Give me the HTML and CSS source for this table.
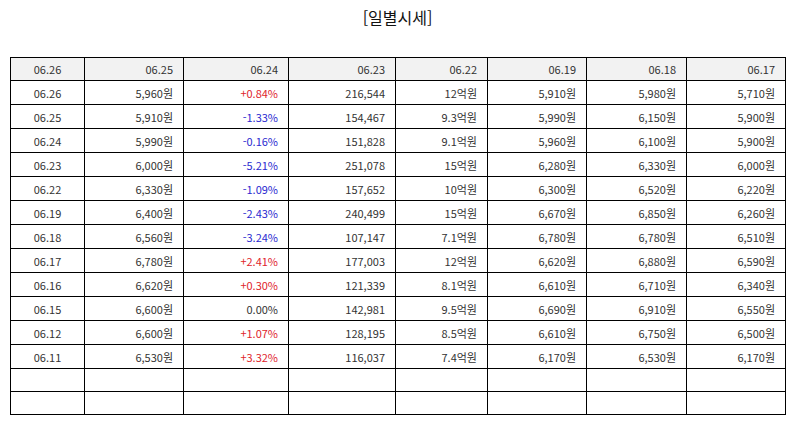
FILE: index.html
```html
<!DOCTYPE html>
<html lang="ko">
<head>
<meta charset="utf-8">
<link rel="stylesheet" href="styles.css">
</head>
<body>
<h1 class="title">[일별시세]</h1>
<table class="grid">
<colgroup>
<col class="c1"><col class="c2"><col class="c3"><col class="c4"><col class="c5"><col class="c6"><col class="c7"><col class="c8">
</colgroup>
<thead>
<tr><th class="ctr">06.26</th><th>06.25</th><th>06.24</th><th>06.23</th><th>06.22</th><th>06.19</th><th>06.18</th><th>06.17</th></tr>
</thead>
<tbody>
<tr><td class="ctr">06.26</td><td>5,960원</td><td class="up">+0.84%</td><td>216,544</td><td>12억원</td><td>5,910원</td><td>5,980원</td><td>5,710원</td></tr>
<tr><td class="ctr">06.25</td><td>5,910원</td><td class="down">-1.33%</td><td>154,467</td><td>9.3억원</td><td>5,990원</td><td>6,150원</td><td>5,900원</td></tr>
<tr><td class="ctr">06.24</td><td>5,990원</td><td class="down">-0.16%</td><td>151,828</td><td>9.1억원</td><td>5,960원</td><td>6,100원</td><td>5,900원</td></tr>
<tr><td class="ctr">06.23</td><td>6,000원</td><td class="down">-5.21%</td><td>251,078</td><td>15억원</td><td>6,280원</td><td>6,330원</td><td>6,000원</td></tr>
<tr><td class="ctr">06.22</td><td>6,330원</td><td class="down">-1.09%</td><td>157,652</td><td>10억원</td><td>6,300원</td><td>6,520원</td><td>6,220원</td></tr>
<tr><td class="ctr">06.19</td><td>6,400원</td><td class="down">-2.43%</td><td>240,499</td><td>15억원</td><td>6,670원</td><td>6,850원</td><td>6,260원</td></tr>
<tr><td class="ctr">06.18</td><td>6,560원</td><td class="down">-3.24%</td><td>107,147</td><td>7.1억원</td><td>6,780원</td><td>6,780원</td><td>6,510원</td></tr>
<tr><td class="ctr">06.17</td><td>6,780원</td><td class="up">+2.41%</td><td>177,003</td><td>12억원</td><td>6,620원</td><td>6,880원</td><td>6,590원</td></tr>
<tr><td class="ctr">06.16</td><td>6,620원</td><td class="up">+0.30%</td><td>121,339</td><td>8.1억원</td><td>6,610원</td><td>6,710원</td><td>6,340원</td></tr>
<tr><td class="ctr">06.15</td><td>6,600원</td><td>0.00%</td><td>142,981</td><td>9.5억원</td><td>6,690원</td><td>6,910원</td><td>6,550원</td></tr>
<tr><td class="ctr">06.12</td><td>6,600원</td><td class="up">+1.07%</td><td>128,195</td><td>8.5억원</td><td>6,610원</td><td>6,750원</td><td>6,500원</td></tr>
<tr><td class="ctr">06.11</td><td>6,530원</td><td class="up">+3.32%</td><td>116,037</td><td>7.4억원</td><td>6,170원</td><td>6,530원</td><td>6,170원</td></tr>
<tr class="empty"><td></td><td></td><td></td><td></td><td></td><td></td><td></td><td></td></tr>
<tr class="empty"><td></td><td></td><td></td><td></td><td></td><td></td><td></td><td></td></tr>
</tbody>
</table>
</body>
</html>
```
FILE: styles.css
```css
html, body {
  margin: 0;
  padding: 0;
  background: #fff;
}
body {
  padding: 0 9px 0 10px;
  font-family: "Noto Sans CJK KR", "Noto Sans", sans-serif;
  color: #333;
}
.title {
  margin: 0;
  height: 57px;
  padding-top: 6px;
  box-sizing: border-box;
  text-align: center;
  font-size: 16px;
  font-weight: 400;
  line-height: 22px;
  color: #111;
}
.grid {
  border-collapse: collapse;
  table-layout: fixed;
  width: 776px;
  font-size: 11px;
}
.c1 { width: 74px; }
.c2 { width: 99px; }
.c3 { width: 105px; }
.c4 { width: 107px; }
.c5 { width: 92px; }
.c6 { width: 99px; }
.c7 { width: 100px; }
.c8 { width: 99px; }
.grid th, .grid td {
  border: 1px solid #000;
  height: 23px;
  padding: 0 10px 0 4px;
  box-sizing: border-box;
  text-align: right;
  font-weight: 400;
  line-height: 14px;
  white-space: nowrap;
}
.grid thead th {
  background: #f2f2f2;
  height: 23px;
}
.grid .ctr {
  text-align: center;
  padding: 0;
}
.grid tbody td {
  height: 24px;
}
.grid tr.empty td {
  height: 23px;
}
.up { color: #e0242c; }
.down { color: #2a2ad0; }
```
